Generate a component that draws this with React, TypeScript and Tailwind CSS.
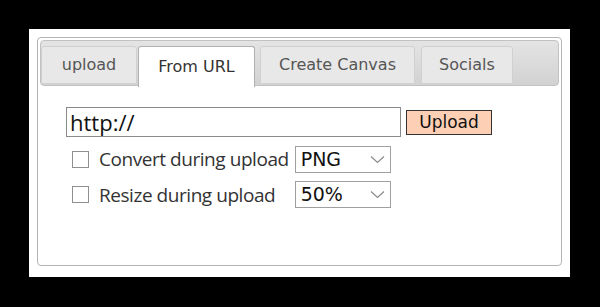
import { useState } from "react";

const tabs = [
  { label: "upload", size: "w-[96px] mr-[1px]" },
  { label: "From URL", size: "w-[117px] mr-[5px]" },
  { label: "Create Canvas", size: "w-[155px] mr-[6px]" },
  { label: "Socials", size: "w-[92px]" },
];

function Chevron() {
  return (
    <svg width="15" height="9" viewBox="0 0 15 9" className="shrink-0">
      <path d="M1 1.5 L7.5 7.5 L14 1.5" fill="none" stroke="#8a8a8a" strokeWidth="1.2" />
    </svg>
  );
}

function FakeSelect({ value }: { value: string }) {
  return (
    <div className="flex h-[27px] w-[96px] items-center justify-between border border-[#a0a0a0] bg-white pl-[5px] pr-[5px] text-[19px] leading-none text-[#111] [font-family:'DejaVu_Sans',sans-serif]">
      <span>{value}</span>
      <Chevron />
    </div>
  );
}

function Option({ label, value }: { label: string; value: string }) {
  return (
    <>
      <div className="flex items-center gap-[10px]">
        <span className="h-[17px] w-[17px] border border-[#8f8f8f] bg-white" />
        <span className="text-[19px] tracking-[-0.45px] text-[#333] [font-family:'Open_Sans',sans-serif]">
          {label}
        </span>
      </div>
      <FakeSelect value={value} />
    </>
  );
}

export default function App() {
  const [active, setActive] = useState(1);
  return (
    <div className="h-[307px] w-[600px] bg-black pl-[29px] pt-[29px]">
      <div className="h-[248px] w-[541px] bg-white pl-[8px] pt-[8px]">
        <div className="flex h-[229px] w-[525px] flex-col rounded-[4px] border border-[#b4b4b4] p-[2px]">
          <div className="flex h-[46px] items-end rounded-[4px] border border-[#c2c2c2] bg-gradient-to-b from-[#e4e4e4] to-[#d2d2d2]">
            {tabs.map((t, i) => (
              <button
                key={t.label}
                onClick={() => setActive(i)}
                className={`${t.size} ${
                  i === active
                    ? "-mb-[2px] h-[41px] rounded-t-[3px] border border-b-0 border-[#b0b0b0] bg-white text-[16px] text-[#333] [font-family:'DejaVu_Sans',sans-serif]"
                    : "mb-px h-[38px] rounded-t-[3px] border border-[#d0d0d0] bg-[#e8e8e8] text-[16px] text-[#555] [font-family:'DejaVu_Sans',sans-serif]"
                }`}
              >
                {t.label}
              </button>
            ))}
          </div>
          <div className="flex flex-col pl-[26px] pt-[21px]">
            <div className="flex items-center gap-[5px]">
              <div className="flex h-[30px] w-[335px] items-center border border-[#8a8a8a] px-[3px] text-[22px] leading-none text-[#111] [font-family:'Open_Sans',sans-serif]">
                http://
              </div>
              <button className="h-[25px] w-[86px] border border-[#333] bg-[#fdd0b5] text-[17px] leading-none text-[#111] [font-family:'DejaVu_Sans',sans-serif]">
                Upload
              </button>
            </div>
            <div className="mt-[8px] grid grid-cols-[auto_auto] items-center justify-start gap-x-[6px] gap-y-[7px] pl-[6px]">
              <Option label="Convert during upload" value="PNG" />
              <Option label="Resize during upload" value="50%" />
            </div>
          </div>
        </div>
      </div>
    </div>
  );
}
